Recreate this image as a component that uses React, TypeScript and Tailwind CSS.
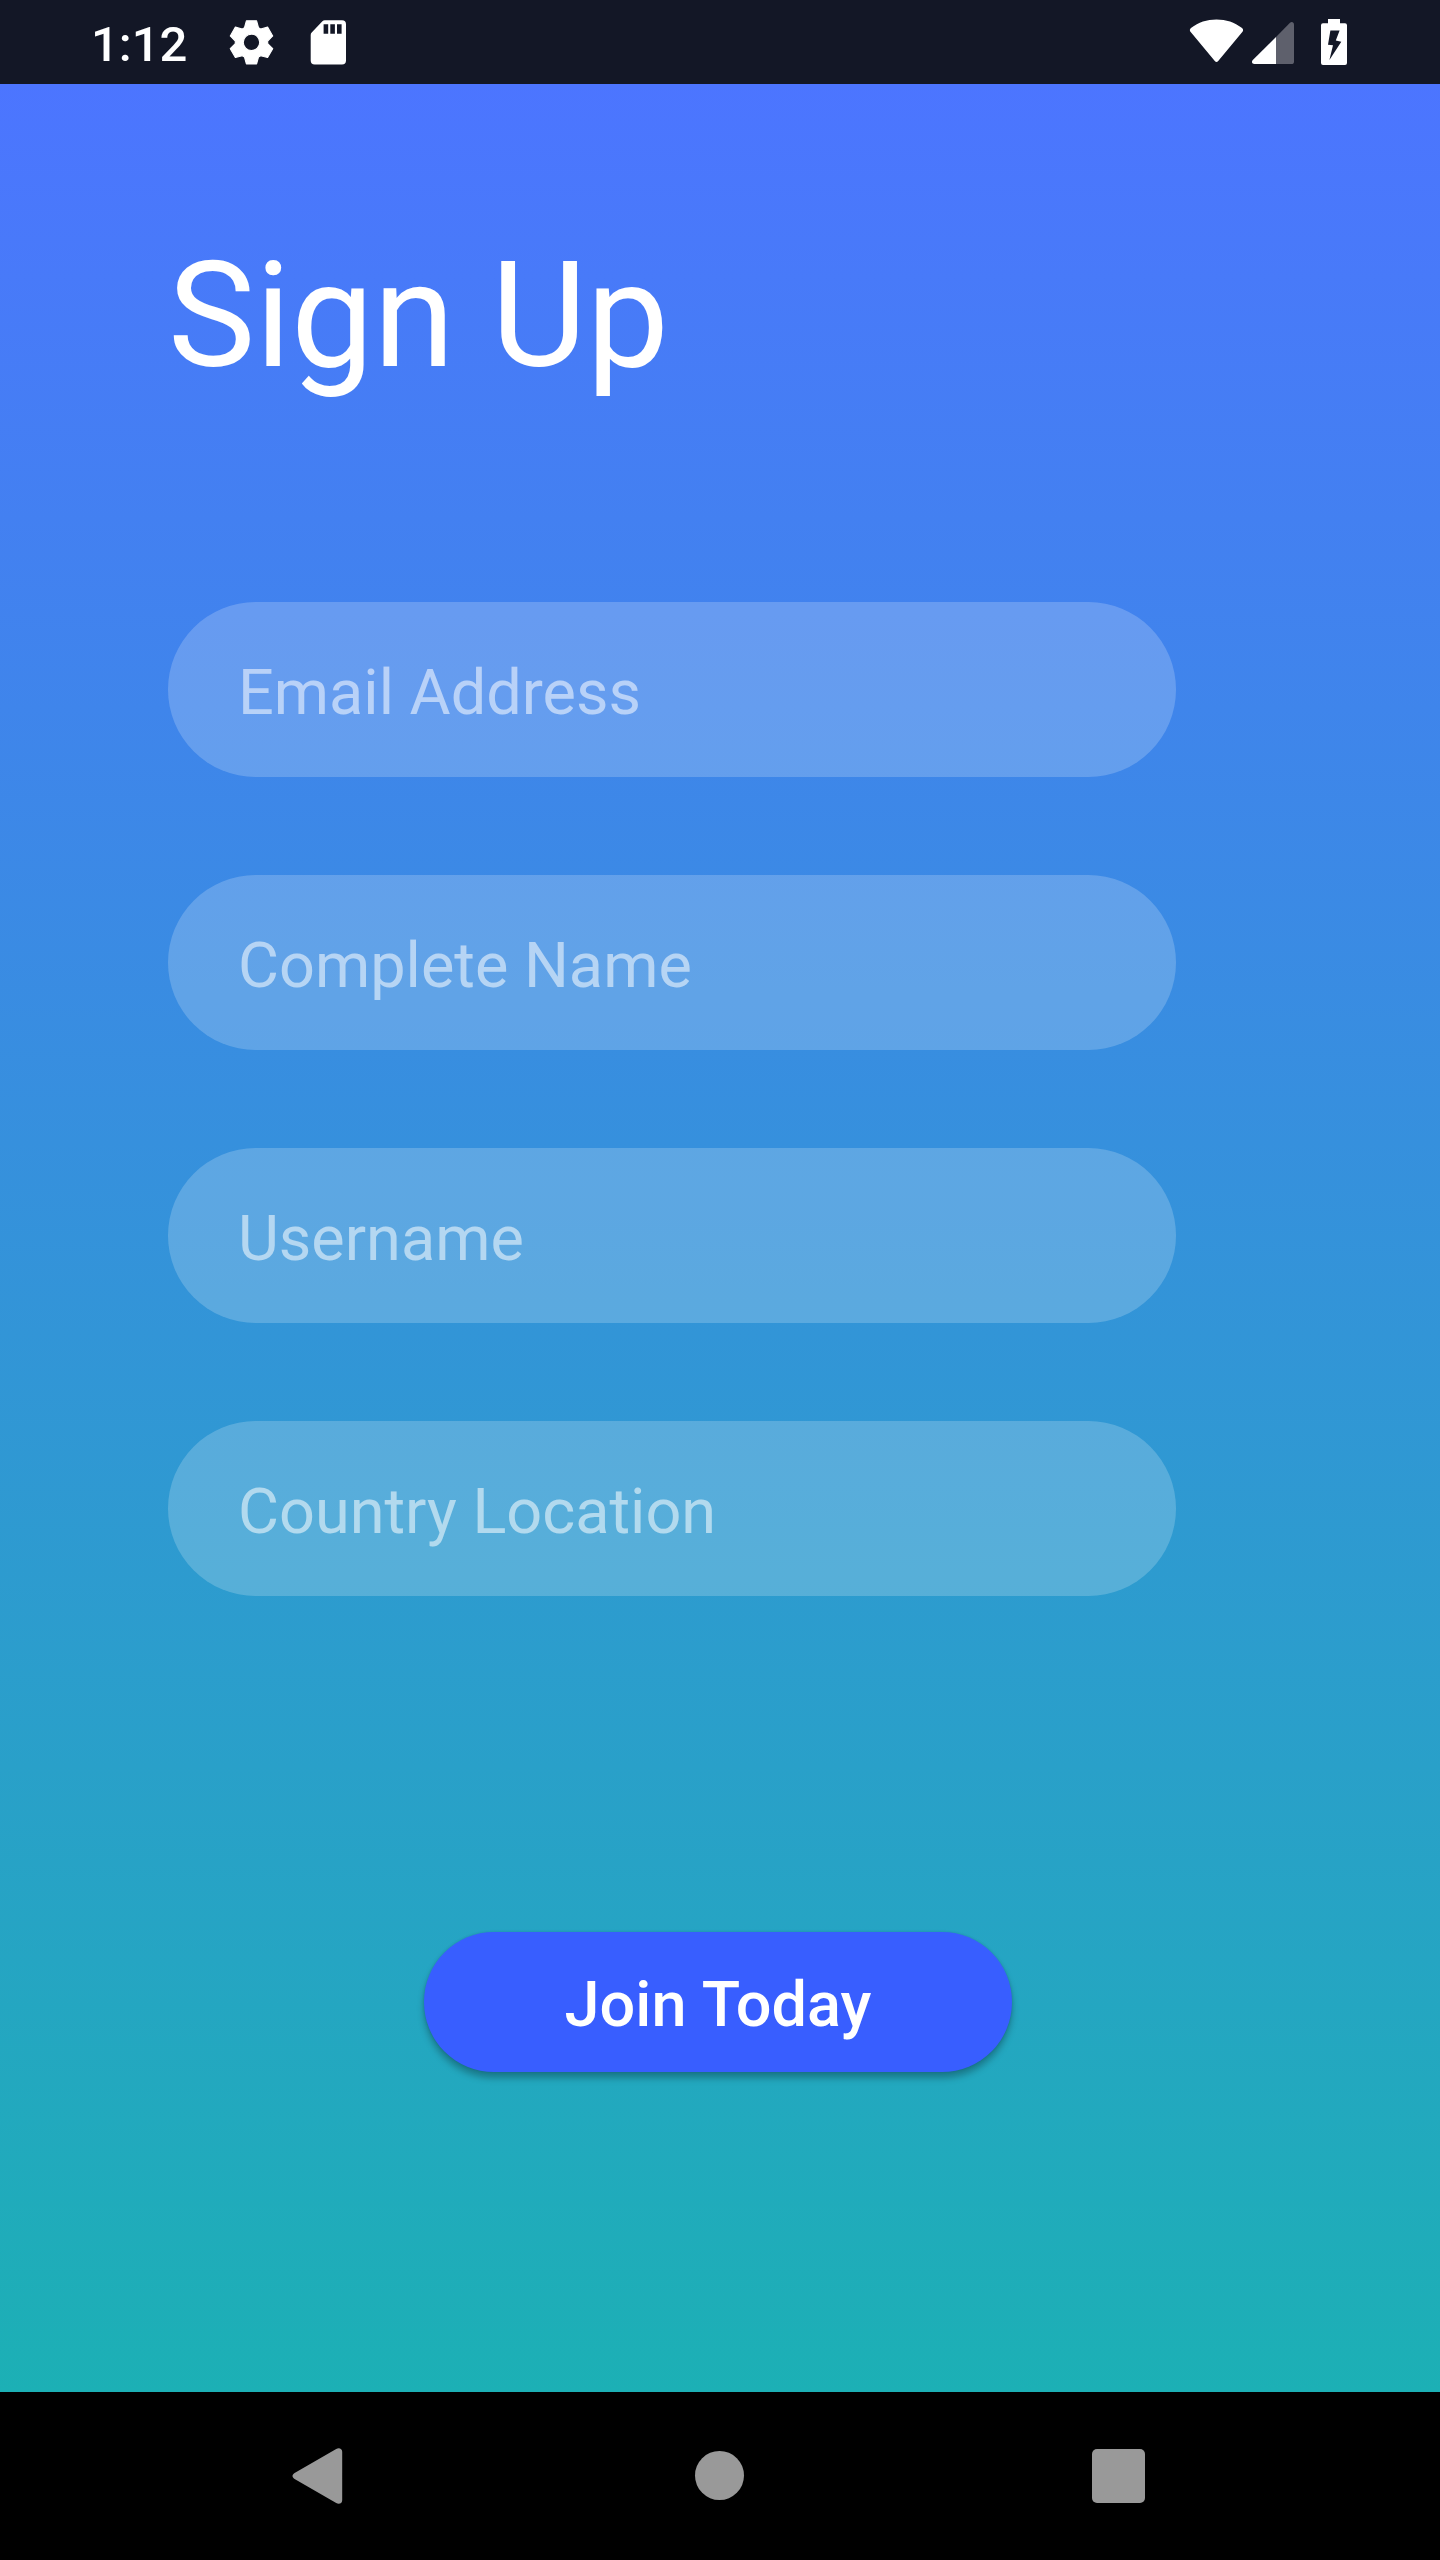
import React from "react";

const fields = ["Email Address", "Complete Name", "Username", "Country Location"];

const toothAngles = [0, 60, 120, 180, 240, 300];
const toothPoints = [
  [-3.15, -6.6],
  [-2.3, -9.7],
  [2.3, -9.7],
  [3.15, -6.6],
];

function gearOutline() {
  const points = toothAngles.flatMap((deg) => {
    const a = (deg * Math.PI) / 180;
    return toothPoints.map(([x, y]) => {
      const px = x * Math.cos(a) - y * Math.sin(a);
      const py = x * Math.sin(a) + y * Math.cos(a);
      return `${px.toFixed(2)} ${py.toFixed(2)}`;
    });
  });
  return `M${points.join("L")}Z`;
}

function GearIcon() {
  return (
    <svg width="46" height="46" viewBox="-10.57 -10.5 20.7 20.7" className="block">
      <path
        d={`${gearOutline()}M0 -3.7A3.7 3.7 0 1 0 0 3.7A3.7 3.7 0 1 0 0 -3.7Z`}
        fill="white"
        fillRule="evenodd"
        stroke="white"
        strokeWidth="0.5"
        strokeLinejoin="round"
      />
    </svg>
  );
}

function SdCardIcon() {
  return (
    <svg width="36" height="45" viewBox="0 0 36 45" className="block">
      <path
        d="M14.8 0.2H32A4 4 0 0 1 36 4.2V40.4A4 4 0 0 1 32 44.4H4.7A4 4 0 0 1 0.7 40.4V15Q0.7 13.6 1.7 12.6L12.4 1.2Q13.4 0.2 14.8 0.2ZM13.6 4.2V13.7H18.2V4.2ZM20.3 4.2V13.7H24.9V4.2ZM27 4.2V13.7H31.6V4.2Z"
        fill="white"
        fillRule="evenodd"
      />
    </svg>
  );
}

function WifiIcon() {
  return (
    <svg width="54" height="44" viewBox="0.2 0 54 44" className="block overflow-visible">
      <path
        d="M1.5 8.7C8.5 3.3 17.2 0.4 26.7 0.4C36.2 0.4 44.9 3.3 51.9 8.7C53.6 10 53.8 11.6 52.5 13.1L28.4 42C27.4 43.2 26 43.2 25 42L0.9 13.1C-0.4 11.6 -0.2 10 1.5 8.7Z"
        fill="white"
      />
    </svg>
  );
}

function SignalIcon() {
  return (
    <svg width="42" height="42" viewBox="0 0 42 42" className="block">
      <path
        d="M24 15L38 0.8C39.6 -0.7 42 0.2 42 2.6V39.4Q42 42 39.4 42H24Z"
        fill="#5e606c"
      />
      <path d="M24 15V42H2.4C0 42 -0.8 39.7 0.8 38.1Z" fill="white" />
    </svg>
  );
}

function BatteryIcon() {
  return (
    <svg width="26" height="46" viewBox="0 0 26 46" className="block">
      <path
        d="M7 0H19V4.2H24Q26 4.2 26 6.2V44Q26 46 24 46H2Q0 46 0 44V6.2Q0 4.2 2 4.2H7ZM9.4 11.5L7 25.8L12 26.2L8.4 41L20.3 22.8L14.8 21.6L18.6 11.5Z"
        fill="white"
        fillRule="evenodd"
      />
    </svg>
  );
}

function StatusBar() {
  return (
    <header className="flex h-[84px] items-start justify-between bg-[#131726] pr-[93px] pl-[91px]">
      <div className="flex items-start">
        <time className="mt-4 w-[137px] text-[49px] leading-[57px] font-medium">1:12</time>
        <div className="mt-[19px] mr-[36px]">
          <GearIcon />
        </div>
        <div className="mt-5">
          <SdCardIcon />
        </div>
      </div>
      <div className="flex items-start">
        <div className="mt-[19px] mr-2">
          <WifiIcon />
        </div>
        <div className="mt-[22px] mr-[27px]">
          <SignalIcon />
        </div>
        <div className="mt-[19px]">
          <BatteryIcon />
        </div>
      </div>
    </header>
  );
}

function NavigationBar() {
  return (
    <nav className="flex h-[168px] items-start bg-black pl-[292px]">
      <button aria-label="Back" className="mt-14 mr-[352px]">
        <svg width="51" height="56" viewBox="0 0 51 56" className="block">
          <path
            d="M44.2 0.9C47 -0.7 50.2 0.6 50.2 3.8V52.2C50.2 55.4 47 56.7 44.2 55.1L2.6 31C-0.2 29.4 -0.2 26.6 2.6 25Z"
            fill="#999999"
          />
        </svg>
      </button>
      <button aria-label="Home" className="mt-[59px] size-[49px] rounded-full bg-[#999999]" />
      <button
        aria-label="Overview"
        className="mt-[57px] ml-[348px] h-[54px] w-[53px] rounded-[5px] bg-[#999999]"
      />
    </nav>
  );
}

export default function App() {
  return (
    <div className="flex h-[2560px] w-[1440px] flex-col overflow-hidden font-[Roboto,sans-serif] text-white">
      <StatusBar />
      <main className="flex flex-1 flex-col bg-linear-to-b/srgb from-[#4c75ff] to-[#1cb0b5] px-[168px]">
        <h1 className="mt-[146px] text-[147px] leading-[172px] font-normal">Sign Up</h1>
        <form className="mt-[200px] flex flex-col">
          <div className="flex flex-col gap-[98px]">
            {fields.map((field) => (
              <label
                key={field}
                className="flex h-[175px] w-[1008px] items-center rounded-full bg-white/20 px-[70px] text-[63px] leading-[74px]"
              >
                <span className="mt-1.5 text-white/54">{field}</span>
              </label>
            ))}
          </div>
          <button
            type="button"
            className="mt-[336px] ml-64 h-[140px] w-[588px] rounded-full bg-[#385eff] pt-1.5 text-[63px] leading-[74px] font-medium [word-spacing:1px] shadow-[0_6px_7px_rgba(0,0,0,0.28),0_0_3px_rgba(0,0,0,0.12)]"
          >
            Join Today
          </button>
        </form>
      </main>
      <NavigationBar />
    </div>
  );
}
